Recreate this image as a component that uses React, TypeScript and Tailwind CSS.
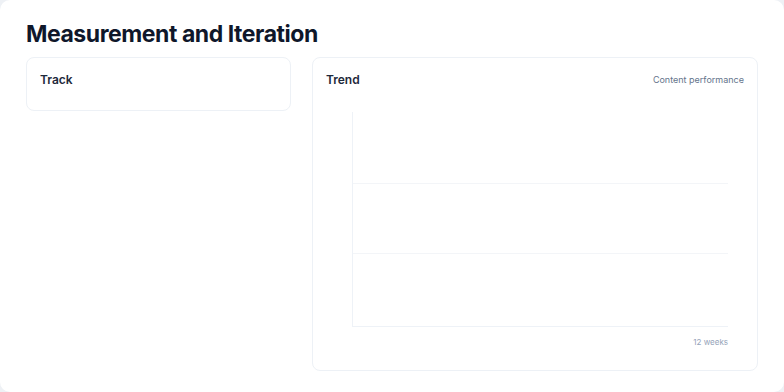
import React from 'react';

export default function App() {
  const font = { fontFamily: 'Inter, "Noto Sans", sans-serif' };
  return (
    <div className="w-[784px] h-[392px] bg-[#eef1f5]" style={font}>
      <div className="h-full bg-white rounded-[10px] px-[26px] pt-[20px]">
        {/* Title */}
        <h1 className="text-[23px] leading-[28px] font-bold text-[#0f172a] tracking-[-0.45px]">
          Measurement and Iteration
        </h1>

        <div className="grid grid-cols-[265px_1fr] gap-[21px] mt-[9px] items-start">
          {/* Track */}
          <div className="border border-[#edf1f6] rounded-lg h-[54px] px-[13px] pt-[14px]">
            <h3 className="text-[12px] leading-[16px] font-semibold text-[#1e293b]">Track</h3>
          </div>

          {/* Trend */}
          <div className="border border-[#edf1f6] rounded-lg h-[314px] px-[13px] pt-[14px]">
            <div className="flex items-center justify-between">
              <h3 className="text-[12px] leading-[16px] font-semibold text-[#1e293b]">Trend</h3>
              <span className="text-[9px] leading-[16px] text-[#64748b]">Content performance</span>
            </div>

            <div className="ml-[26px] mr-[16px] mt-[24px]">
              <div className="h-[215px] border-l border-b border-[#eef2f7] flex flex-col">
                <div className="h-[72px] border-b border-[#f3f5f8]" />
                <div className="h-[70px] border-b border-[#f3f5f8]" />
                <div className="flex-1" />
              </div>
              <div className="text-right text-[8px] leading-[12px] text-[#94a3b8] mt-[9px]">12 weeks</div>
            </div>
          </div>
        </div>
      </div>
    </div>
  );
}
